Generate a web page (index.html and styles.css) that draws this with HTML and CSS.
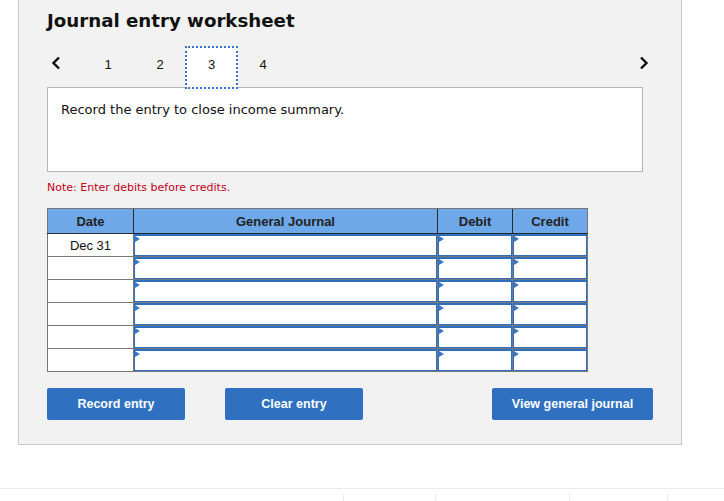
FILE: index.html
```html
<!DOCTYPE html>
<html>
<head>
<meta charset="utf-8">
<link rel="stylesheet" href="styles.css">
</head>
<body>
<div class="panel">
  <h1 class="title">Journal entry worksheet</h1>
  <div class="tabs">
    <span class="arrow prev"><svg width="10" height="14" viewBox="0 0 10 14"><path d="M8 1.5 L2.5 7 L8 12.5" fill="none" stroke="#111" stroke-width="2.4"/></svg></span>
    <span class="tab">1</span>
    <span class="tab">2</span>
    <span class="tab active">3</span>
    <span class="tab">4</span>
    <span class="spacer"></span>
    <span class="arrow next"><svg width="10" height="14" viewBox="0 0 10 14"><path d="M2 1.5 L7.5 7 L2 12.5" fill="none" stroke="#111" stroke-width="2.4"/></svg></span>
  </div>
  <div class="prompt">Record the entry to close income summary.</div>
  <p class="note">Note: Enter debits before credits.</p>
  <table class="journal">
    <colgroup>
      <col class="c-date"><col class="c-gj"><col class="c-amt"><col class="c-amt">
    </colgroup>
    <thead>
      <tr><th>Date</th><th>General Journal</th><th>Debit</th><th>Credit</th></tr>
    </thead>
    <tbody>
      <tr><td class="date">Dec 31</td><td><div class="in"></div></td><td><div class="in"></div></td><td><div class="in"></div></td></tr>
      <tr><td class="date"></td><td><div class="in"></div></td><td><div class="in"></div></td><td><div class="in"></div></td></tr>
      <tr><td class="date"></td><td><div class="in"></div></td><td><div class="in"></div></td><td><div class="in"></div></td></tr>
      <tr><td class="date"></td><td><div class="in"></div></td><td><div class="in"></div></td><td><div class="in"></div></td></tr>
      <tr><td class="date"></td><td><div class="in"></div></td><td><div class="in"></div></td><td><div class="in"></div></td></tr>
      <tr><td class="date"></td><td><div class="in"></div></td><td><div class="in"></div></td><td><div class="in"></div></td></tr>
    </tbody>
  </table>
  <div class="buttons">
    <div class="group">
      <button class="btn">Record entry</button>
      <button class="btn">Clear entry</button>
    </div>
    <button class="btn wide">View general journal</button>
  </div>
</div>
<div class="footer">
  <div class="fcell f1"></div>
  <div class="fcell f2"></div>
  <div class="fcell f3"></div>
  <div class="fcell f4"></div>
  <div class="fcell f5"></div>
</div>
</body>
</html>
```
FILE: styles.css
```css
* { box-sizing: border-box; }
html, body { margin: 0; padding: 0; background: #fff; }
body { font-family: "Liberation Sans", Arial, sans-serif; color: #111; }

.panel {
  margin-left: 18px;
  width: 664px;
  background: #f2f2f2;
  border: 1px solid #c8c8c8;
  border-top: none;
  padding: 10px 28px 24px 28px;
}

.title {
  margin: 0;
  font-family: "DejaVu Sans", Verdana, sans-serif;
  font-weight: bold;
  font-size: 18.2px;
  line-height: 22px;
  color: #111;
}

.tabs {
  display: flex;
  align-items: flex-start;
  height: 41px;
  margin-top: 14px;
  position: relative;
  z-index: 1;
}
.arrow { display: flex; padding-top: 10px; }
.prev { width: 35px; padding-left: 4px; }
.next { padding-right: 4px; }
.spacer { flex: 1; }
.tab {
  width: 52px;
  height: 43px;
  text-align: center;
  font-size: 13px;
  line-height: 15px;
  padding-top: 11px;
  color: #111;
}
.tab.active {
  background: #fff;
  border: 2px dotted #3a72c2;
  padding-top: 9px;
  width: 53px;
  margin: 0 -1px 0 -1px;
}

.prompt {
  width: 596px;
  height: 85px;
  background: #fff;
  border: 1px solid #b5b5b5;
  padding: 14px 13px 0 13px;
  font-family: "DejaVu Sans", Verdana, sans-serif;
  font-size: 13px;
  line-height: 16px;
  color: #111;
}

.note {
  margin: 8px 0 13px 0;
  font-family: "DejaVu Sans", Verdana, sans-serif;
  font-size: 11px;
  line-height: 15px;
  color: #c4001a;
}

.journal {
  border-collapse: collapse;
  width: 539px;
  table-layout: fixed;
  border: 1px solid #777;
}
.c-date { width: 86px; }
.c-gj { width: 304px; }
.c-amt { width: 75px; }

.journal th {
  background: #6fa8e8;
  height: 25px;
  padding: 0;
  font-size: 13px;
  font-weight: bold;
  color: #222;
  border-left: 1px solid #2a2a2a;
  border-bottom: 1px solid #2a2a2a;
  border-top: 1px solid #777;
}
.journal th:first-child { border-left: 1px solid #777; }
.journal td {
  height: 23px;
  padding: 0;
  border: 1px solid #777;
  background: #fff;
  vertical-align: top;
}
.journal td.date {
  text-align: center;
  vertical-align: middle;
  font-size: 13px;
  color: #111;
}
.in {
  position: relative;
  height: 22px;
  border: 1px solid #2f6fbf;
  border-top-width: 2px;
  background: #fff;
}
.in::before {
  content: "";
  position: absolute;
  left: 0;
  top: 0;
  border-left: 5px solid #3a78c8;
  border-top: 3px solid transparent;
  border-bottom: 3px solid transparent;
}

.buttons {
  display: flex;
  justify-content: space-between;
  margin-top: 16px;
}
.group { display: flex; gap: 40px; }
.btn {
  width: 138px;
  height: 32px;
  background: #2f70c1;
  color: #fff;
  border: none;
  border-radius: 2px;
  font-family: "Liberation Sans", Arial, sans-serif;
  font-weight: bold;
  font-size: 12.5px;
  padding: 0;
}
.btn.wide { width: 161px; }

.footer {
  margin-top: 43px;
  border-top: 1px solid #ececec;
  display: flex;
  padding-top: 5px;
  height: 13px;
}
.fcell { height: 8px; }
.f1 { width: 343px; }
.f2 { width: 92px; border-left: 1px solid #ececec; }
.f3 { width: 134px; border-left: 1px solid #ececec; }
.f4 { width: 98px; border-left: 1px solid #ececec; }
.f5 { flex: 1; border-left: 1px solid #ececec; }
```
